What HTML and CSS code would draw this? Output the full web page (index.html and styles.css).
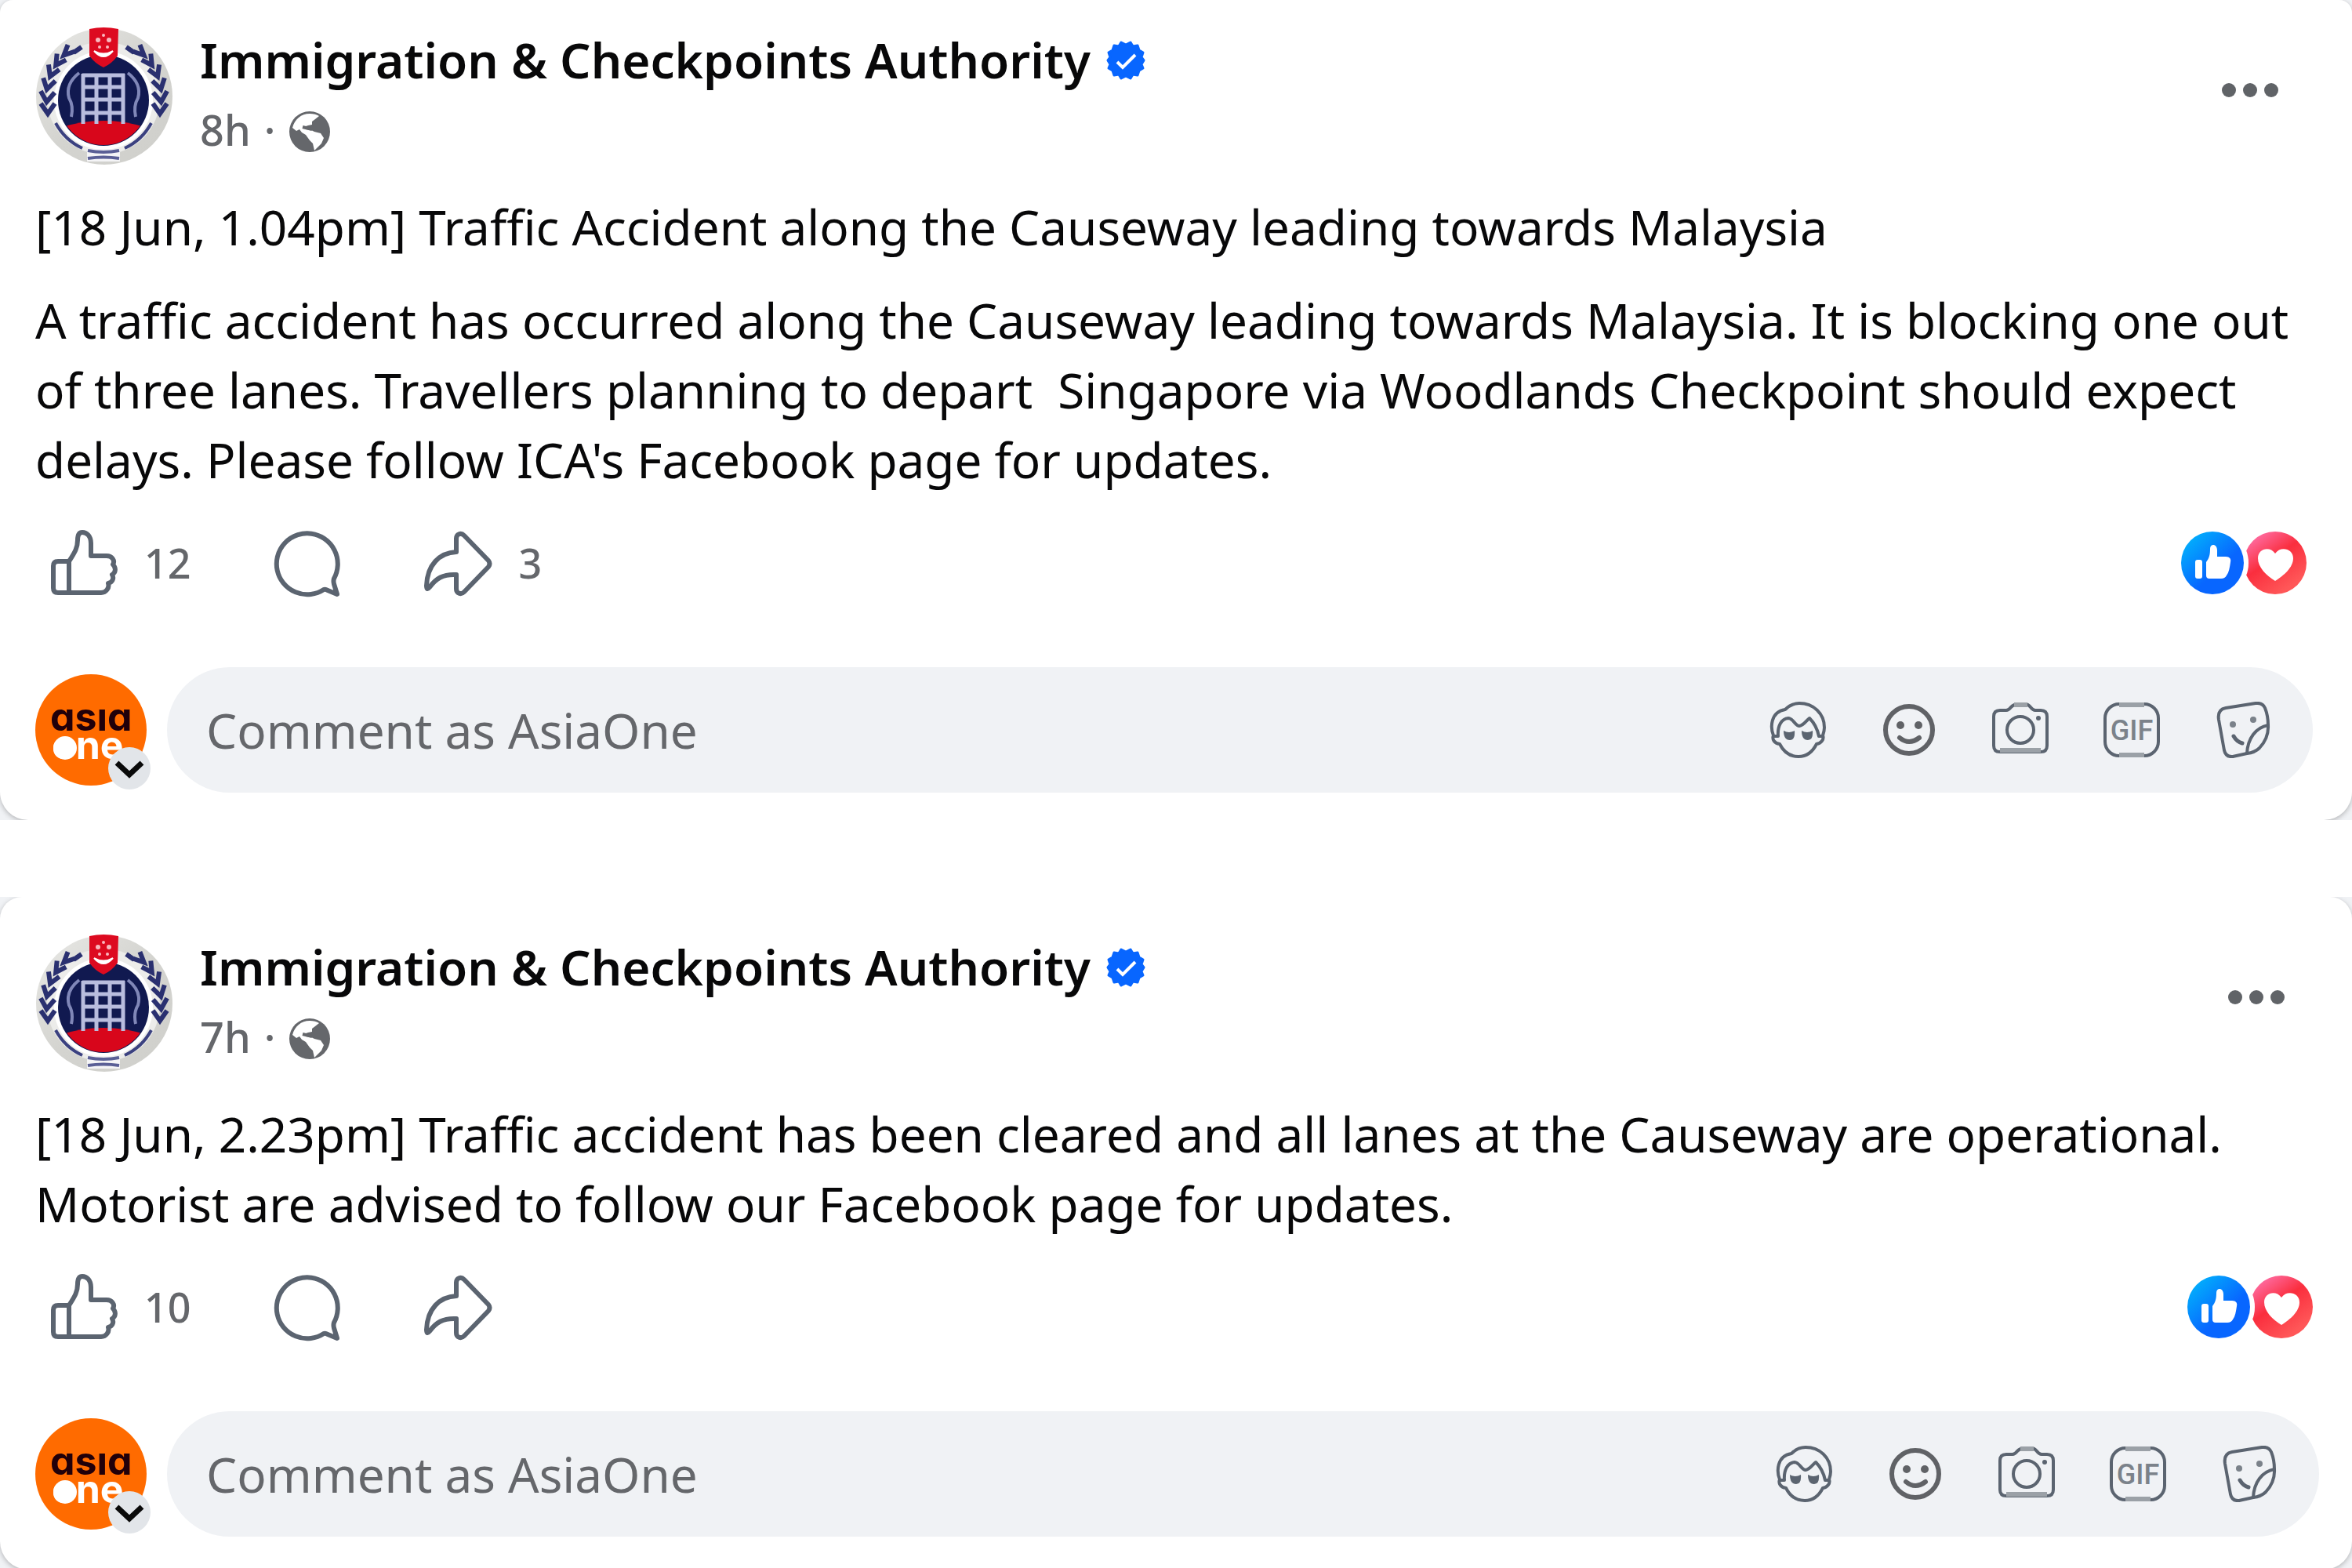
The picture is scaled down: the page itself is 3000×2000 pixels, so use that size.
FILE: index.html
```html
<!DOCTYPE html>
<html lang="en">
<head>
<meta charset="utf-8">
<title>Immigration &amp; Checkpoints Authority</title>
<link rel="stylesheet" href="styles.css">
</head>
<body>
<svg class="sprite" aria-hidden="true">
  <defs>
    <linearGradient id="like-fill" x1="0.1" y1="0.15" x2="0.75" y2="0.85">
      <stop offset="0" stop-color="#02adfc"/><stop offset="0.7" stop-color="#0866ff"/><stop offset="1" stop-color="#0866ff"/>
    </linearGradient>
    <linearGradient id="love-fill" x1="0.1" y1="0.05" x2="0.7" y2="0.9">
      <stop offset="0" stop-color="#ff74ae"/><stop offset="0.5" stop-color="#fa2e3e"/><stop offset="1" stop-color="#ff5758"/>
    </linearGradient>
    <linearGradient id="silver" x1="0" y1="0" x2="1" y2="1">
      <stop offset="0" stop-color="#e9e9e6"/><stop offset="0.5" stop-color="#d4d4d0"/><stop offset="1" stop-color="#cfcfcb"/>
    </linearGradient>
    <clipPath id="crest-disc"><circle cx="87" cy="93" r="57"/></clipPath>
    <g id="laurel" fill="none" stroke="#2a3070" stroke-width="6">
      <path d="M-9-8L0 5L9-8" transform="translate(16 105)"/>
      <path d="M-9-8L0 5L9-8" transform="translate(15 90) rotate(6)"/>
      <path d="M-8-8L0 5L8-8" transform="translate(16 74) rotate(14)"/>
      <path d="M-8-8L0 5L7-8" transform="translate(21 58) rotate(24)"/>
      <path d="M-7-8L0 5L7-8" transform="translate(29 44) rotate(34)"/>
      <path d="M-6-8L0 5L6-8" transform="translate(40 32) rotate(46)"/>
      <path d="M49 32L59 25"/>
    </g>
  </defs>
  <symbol id="crest" viewBox="0 0 176 176">
    <circle cx="88" cy="88" r="87" fill="url(#silver)"/>
    <circle cx="87" cy="90" r="72" fill="#ececea"/>
    <circle cx="87" cy="93" r="63" fill="#fff"/>
    <use href="#laurel"/>
    <use href="#laurel" transform="translate(175 0) scale(-1 1)"/>
    <circle cx="87" cy="93" r="58" fill="#111950"/>
    <g clip-path="url(#crest-disc)">
      <path d="M25 130Q87 108 149 130V160H25Z" fill="#d8061b"/>
    </g>
    <path d="M60 61H114M60 76H114M60 92H114M60 109H114M61 59V123M78 59V123M95 59V123M112 59V123" fill="none" stroke="#b9bdde" stroke-width="5"/>
    <path d="M56 58Q38 72 43 90Q49 100 46 114M118 58Q136 72 131 90Q125 100 128 114" fill="none" stroke="#8087b8" stroke-width="4"/>
    <path d="M26 122Q38 144 60 154M148 122Q136 144 114 154" fill="none" stroke="#3b4180" stroke-width="4"/>
    <path d="M66 155H108V171H66Z" fill="#f4f4f6"/>
    <path d="M67 157Q87 161 107 157M67 167Q87 164 107 167" fill="none" stroke="#5a5f96" stroke-width="4"/>
    <path d="M69 2Q87-2 106 2L105 36Q98 46 87 51Q76 46 69 36Z" fill="#dd0a20"/>
    <path d="M75 30Q87 44 99 30Q87 37 75 30Z" fill="#fff" stroke="#fff" stroke-width="2"/>
    <g fill="#f8b8be"><circle cx="80" cy="16" r="3"/><circle cx="94" cy="16" r="3"/><circle cx="87" cy="10" r="2"/><circle cx="82" cy="25" r="2"/><circle cx="92" cy="25" r="2"/></g>
  </symbol>
  <symbol id="verified" viewBox="0 0 50 50">
    <path fill="#0866ff" stroke="#0866ff" stroke-width="3" stroke-linejoin="round" d="M25 5L31 2L34 7L40 6L42 12L47 15L45 21L48 25L45 30L47 35L42 38L40 44L34 43L31 48L25 45L19 48L16 43L10 44L8 38L3 35L5 30L2 25L5 21L3 15L8 12L10 6L16 7L19 2Z"/>
    <path d="M14 27L21 34L37 18" fill="none" stroke="#fff" stroke-width="4"/>
  </symbol>
  <symbol id="globe" viewBox="0 0 54 54">
    <circle cx="27" cy="27" r="26" fill="#65676b"/>
    <path fill="#fff" d="M5 22C8 11 16 4 27 4C32 4 36 5 39 7L34 11L30 14L30 18L25 19L19 21L22 24L29 25L33 27L41 29L45 35L42 42L37 47L33 51L31 42L27 38L22 31L17 28L14 24L10 26Z"/>
    <path d="M18 21L30 24" stroke="#65676b" stroke-width="4"/>
  </symbol>
  <symbol id="dots" viewBox="0 0 72 72">
    <g fill="#606367"><circle cx="9" cy="36" r="9"/><circle cx="36" cy="36" r="9"/><circle cx="63" cy="36" r="9"/></g>
  </symbol>
  <symbol id="like" viewBox="0 0 88 88">
    <g fill="none" stroke="#5b6470" stroke-width="6" stroke-linejoin="round">
      <path d="M26 42H12Q6 42 6 48V76Q6 82 12 82H26Z"/>
      <path d="M26 42C34 30 37 24 37 15C37 8 39 5 43 5C49 5 54 10 54 19V35H74C81 35 85 41 82 46C86 50 86 56 81 59C84 64 81 69 76 70C78 76 73 82 67 82H26"/>
    </g>
  </symbol>
  <symbol id="comment" viewBox="0 0 88 88">
    <path d="M65 78A39 39 0 1 1 78 64Q77 67 78 71L82 84L70 79Q67 77 65 78Z" fill="none" stroke="#5b6470" stroke-width="6" stroke-linejoin="round"/>
  </symbol>
  <symbol id="share" viewBox="0 0 88 88">
    <path d="M42 30V13C42 7 48 5 52 9L83 41Q86 45 83 49L52 81C48 85 42 83 42 77V59C25 58 16 64 8 75Q4 80 4 73C5 47 20 31 42 30Z" fill="none" stroke="#5b6470" stroke-width="6" stroke-linejoin="round"/>
  </symbol>
  <symbol id="reactions" viewBox="0 0 160 80">
    <circle cx="120" cy="40" r="40" fill="url(#love-fill)"/>
    <path fill="#fff" d="M120 63C109 56 98 46 98 34C98 22 113 18 120 28C127 18 143 22 143 34C143 46 131 56 120 63Z"/>
    <circle cx="40" cy="40" r="46" fill="#fff"/>
    <circle cx="40" cy="40" r="40" fill="url(#like-fill)"/>
    <rect x="18" y="36" width="9" height="24" rx="3" fill="#fff"/>
    <path fill="#fff" d="M32 39C36 34 37 29 37 22C37 15 46 15 46 24V32H57C62 32 64 35 63 39C62 46 61 52 58 56Q56 60 51 60H36Q32 60 32 56Z"/>
  </symbol>
  <symbol id="chevron" viewBox="0 0 54 54">
    <circle cx="27" cy="27" r="27" fill="#e2e5e9"/>
    <path d="M11 20L27 35L43 20" fill="none" stroke="#0a0a0a" stroke-width="7"/>
  </symbol>
  <symbol id="avatar-face" viewBox="0 0 72 72">
    <g fill="none" stroke="#5b6470" stroke-width="4" stroke-linejoin="round">
      <path d="M20 10C25 5 31 2 38 2C56 2 70 15 70 33C70 37 69 40 68 43C70 48 66 53 60 54C55 64 47 70 37 70C26 70 18 64 13 54C6 53 3 48 5 43C1 33 1 13 20 10Z"/>
      <path d="M6 44H11C10 31 15 22 24 21C30 21 33 31 38 31C44 30 46 25 51 21C56 26 61 34 63 44H68"/>
    </g>
    <path d="M18 37Q25 41 32 37Q33 49 26 49Q18 49 18 37ZM41 37Q48 41 55 37Q56 49 49 49Q41 49 41 37Z" fill="#5b6470"/>
  </symbol>
  <symbol id="smile" viewBox="0 0 72 72">
    <circle cx="36" cy="36" r="30" fill="none" stroke="#606266" stroke-width="6"/>
    <circle cx="25" cy="30" r="5" fill="#606266"/><circle cx="48" cy="30" r="5" fill="#606266"/>
    <path d="M24 46Q36 56 49 46" fill="none" stroke="#606266" stroke-width="6" stroke-linecap="round"/>
  </symbol>
  <symbol id="camera" viewBox="0 0 72 72">
    <path d="M10 11H18Q21 11 24 7Q28 3 32 3H42Q46 3 49 7Q52 11 55 11H62Q70 11 70 19V56Q70 64 62 64H10Q2 64 2 56V19Q2 11 10 11Z" fill="none" stroke="#5b6470" stroke-width="4"/>
    <path d="M10 62H62M28 4H45" stroke="#9ba1a7" stroke-width="6"/>
    <circle cx="36" cy="36" r="17" fill="none" stroke="#5b6470" stroke-width="4"/>
    <circle cx="59" cy="21" r="3" fill="#5b6470"/>
  </symbol>
  <symbol id="sticker" viewBox="0 0 72 72">
    <g fill="none" stroke="#5b6470" stroke-width="4" stroke-linejoin="round" stroke-linecap="round">
      <path d="M14 8L52 2Q61 1 64 8Q68 18 68 30Q69 46 57 59Q51 65 41 66L23 70Q14 71 12 62L5 23Q3 10 14 8Z"/>
      <path d="M68 30C52 33 42 47 41 66"/>
      <path d="M24 44Q28 51 35 53" stroke-width="5"/>
    </g>
    <circle cx="23" cy="29" r="4" fill="#7b828a"/><circle cx="49" cy="23" r="4" fill="#7b828a"/>
  </symbol>
</svg>

<main class="feed">
  <article class="post post-first">
    <div class="card">
      <header class="post-header">
        <svg class="crest" role="img" aria-label="Immigration &amp; Checkpoints Authority"><use href="#crest"/></svg>
        <div class="info">
          <h2 class="name"><a href="#">Immigration &amp; Checkpoints Authority</a><svg class="verified" role="img" aria-label="Verified"><use href="#verified"/></svg></h2>
          <div class="meta"><a href="#">8h</a><span>·</span><svg class="globe" role="img" aria-label="Public"><use href="#globe"/></svg></div>
        </div>
        <button class="more" type="button" aria-label="More"><svg><use href="#dots"/></svg></button>
      </header>
      <div class="message">
        <p>[18 Jun, 1.04pm] Traffic Accident along the Causeway leading towards Malaysia</p>
        <p>A traffic accident has occurred along the Causeway leading towards Malaysia. It is blocking one out of three lanes. Travellers planning to depart&nbsp; Singapore via Woodlands Checkpoint should expect delays. Please follow ICA's Facebook page for updates.</p>
      </div>
      <div class="actions">
        <button class="action" type="button" aria-label="Like"><svg><use href="#like"/></svg><span>12</span></button>
        <button class="action" type="button" aria-label="Comment"><svg><use href="#comment"/></svg></button>
        <button class="action" type="button" aria-label="Share"><svg><use href="#share"/></svg><span>3</span></button>
        <svg class="reactions" role="img" aria-label="Like and Love"><use href="#reactions"/></svg>
      </div>
      <form class="composer">
        <button class="identity" type="button" aria-label="Switch profile">
          <svg class="brand" viewBox="0 0 142 142">
            <circle cx="71" cy="71" r="71" fill="#ff6b00"/>
            <text class="brand-word" x="19" y="72" fill="#21000a">asıa</text>
            <text class="brand-word" x="21" y="108" fill="#fff">one</text>
            <circle cx="38" cy="94" r="15" fill="#fff"/>
          </svg>
          <svg class="chevron"><use href="#chevron"/></svg>
        </button>
        <div class="field">
          <input type="text" placeholder="Comment as AsiaOne" aria-label="Comment as AsiaOne">
          <button type="button" aria-label="Avatar stickers"><svg><use href="#avatar-face"/></svg></button>
          <button type="button" aria-label="Emoji"><svg><use href="#smile"/></svg></button>
          <button type="button" aria-label="Photo"><svg><use href="#camera"/></svg></button>
          <button type="button" aria-label="GIF">
            <svg viewBox="0 0 72 72">
              <rect x="2" y="3" width="68" height="66" rx="18" fill="none" stroke="#5b6470" stroke-width="4"/>
              <path d="M20 4H52M20 68H52" stroke="#9ba1a7" stroke-width="6"/>
              <text class="gif-word" x="36" y="49" text-anchor="middle" fill="#7b828a">GIF</text>
            </svg>
          </button>
          <button type="button" aria-label="Sticker"><svg><use href="#sticker"/></svg></button>
        </div>
      </form>
    </div>
  </article>

  <article class="post post-second">
    <div class="card">
      <header class="post-header">
        <svg class="crest" role="img" aria-label="Immigration &amp; Checkpoints Authority"><use href="#crest"/></svg>
        <div class="info">
          <h2 class="name"><a href="#">Immigration &amp; Checkpoints Authority</a><svg class="verified" role="img" aria-label="Verified"><use href="#verified"/></svg></h2>
          <div class="meta"><a href="#">7h</a><span>·</span><svg class="globe" role="img" aria-label="Public"><use href="#globe"/></svg></div>
        </div>
        <button class="more" type="button" aria-label="More"><svg><use href="#dots"/></svg></button>
      </header>
      <div class="message">
        <p>[18 Jun, 2.23pm] Traffic accident has been cleared and all lanes at the Causeway are operational. Motorist are advised to follow our Facebook page for updates.</p>
      </div>
      <div class="actions">
        <button class="action" type="button" aria-label="Like"><svg><use href="#like"/></svg><span>10</span></button>
        <button class="action" type="button" aria-label="Comment"><svg><use href="#comment"/></svg></button>
        <button class="action" type="button" aria-label="Share"><svg><use href="#share"/></svg></button>
        <svg class="reactions" role="img" aria-label="Like and Love"><use href="#reactions"/></svg>
      </div>
      <form class="composer">
        <button class="identity" type="button" aria-label="Switch profile">
          <svg class="brand" viewBox="0 0 142 142">
            <circle cx="71" cy="71" r="71" fill="#ff6b00"/>
            <text class="brand-word" x="19" y="72" fill="#21000a">asıa</text>
            <text class="brand-word" x="21" y="108" fill="#fff">one</text>
            <circle cx="38" cy="94" r="15" fill="#fff"/>
          </svg>
          <svg class="chevron"><use href="#chevron"/></svg>
        </button>
        <div class="field">
          <input type="text" placeholder="Comment as AsiaOne" aria-label="Comment as AsiaOne">
          <button type="button" aria-label="Avatar stickers"><svg><use href="#avatar-face"/></svg></button>
          <button type="button" aria-label="Emoji"><svg><use href="#smile"/></svg></button>
          <button type="button" aria-label="Photo"><svg><use href="#camera"/></svg></button>
          <button type="button" aria-label="GIF">
            <svg viewBox="0 0 72 72">
              <rect x="2" y="3" width="68" height="66" rx="18" fill="none" stroke="#5b6470" stroke-width="4"/>
              <path d="M20 4H52M20 68H52" stroke="#9ba1a7" stroke-width="6"/>
              <text class="gif-word" x="36" y="49" text-anchor="middle" fill="#7b828a">GIF</text>
            </svg>
          </button>
          <button type="button" aria-label="Sticker"><svg><use href="#sticker"/></svg></button>
        </div>
      </form>
    </div>
  </article>
</main>
</body>
</html>
```
FILE: styles.css
```css
* {
  box-sizing: border-box;
}

body {
  margin: 0;
  background: #fff;
  color: #080809;
  font-family: "Noto Sans", sans-serif;
  font-size: 62px;
  line-height: 89px;
}

svg {
  display: block;
  flex: none;
}

a {
  color: inherit;
  text-decoration: none;
}

button {
  display: block;
  flex: none;
  margin: 0;
  padding: 0;
  border: 0;
  background: none;
  color: inherit;
  font: inherit;
  cursor: pointer;
}

.sprite {
  position: absolute;
  width: 0;
  height: 0;
}

.feed {
  display: flex;
  flex-direction: column;
  gap: 98px;
}

.post {
  overflow: hidden;
  background: #f0f2f5;
}

.card {
  background: #fff;
  box-shadow: 0 2px 6px rgba(0, 0, 0, 0.25);
}

.post-first .card {
  padding: 32px 50px 35px 45px;
  border-radius: 16px 16px 36px 36px;
}

.post-second .card {
  padding: 45px 42px 42px 45px;
  border-radius: 28px 28px 36px 36px;
}

.post-header {
  display: flex;
  align-items: flex-start;
  gap: 34px;
}

.crest {
  width: 176px;
  height: 176px;
  margin-top: 3px;
}

.info {
  flex: 1;
}

.name {
  display: flex;
  align-items: center;
  gap: 20px;
  margin: 0;
  font-size: 62px;
  font-weight: 600;
}

.verified {
  width: 50px;
  height: 50px;
}

.meta {
  display: flex;
  align-items: center;
  gap: 17px;
  color: #65676b;
  font-size: 54px;
  font-weight: 500;
}

.globe {
  width: 54px;
  height: 54px;
  margin-top: 4px;
}

.more {
  margin: 47px 44px 0 0;
}

.more svg,
.field svg {
  width: 72px;
  height: 72px;
}

.message {
  display: flex;
  flex-direction: column;
  gap: 30px;
  margin-top: 34px;
}

.message p {
  margin: 0;
}

.actions {
  display: flex;
  align-items: center;
  gap: 104px;
  margin-top: 42px;
  padding: 0 8px 0 17px;
}

.action {
  display: flex;
  align-items: center;
  gap: 34px;
  color: #65676b;
  font-size: 52px;
  font-weight: 500;
}

.action svg {
  width: 88px;
  height: 88px;
}

.reactions {
  width: 160px;
  height: 80px;
  margin-left: auto;
}

.composer {
  display: flex;
  align-items: center;
  gap: 26px;
  margin-top: 89px;
}

.identity {
  position: relative;
}

.brand {
  width: 142px;
  height: 142px;
}

.brand-word {
  font-family: Inter, sans-serif;
  font-size: 50px;
  font-weight: 700;
  font-feature-settings: "cv11";
}

.gif-word {
  font-family: Roboto, sans-serif;
  font-size: 36px;
  font-weight: 500;
}

.chevron {
  position: absolute;
  right: -5px;
  bottom: -5px;
  width: 54px;
  height: 54px;
}

.field {
  display: flex;
  flex: 1;
  align-items: center;
  gap: 70px;
  height: 160px;
  padding: 0 53px 0 50px;
  border-radius: 80px;
  background: #f0f2f5;
}

.field input {
  flex: 1;
  min-width: 0;
  padding: 0;
  border: 0;
  outline: 0;
  background: none;
  color: #080809;
  font: inherit;
}

.field input::placeholder {
  color: #65676b;
  opacity: 1;
}
```
